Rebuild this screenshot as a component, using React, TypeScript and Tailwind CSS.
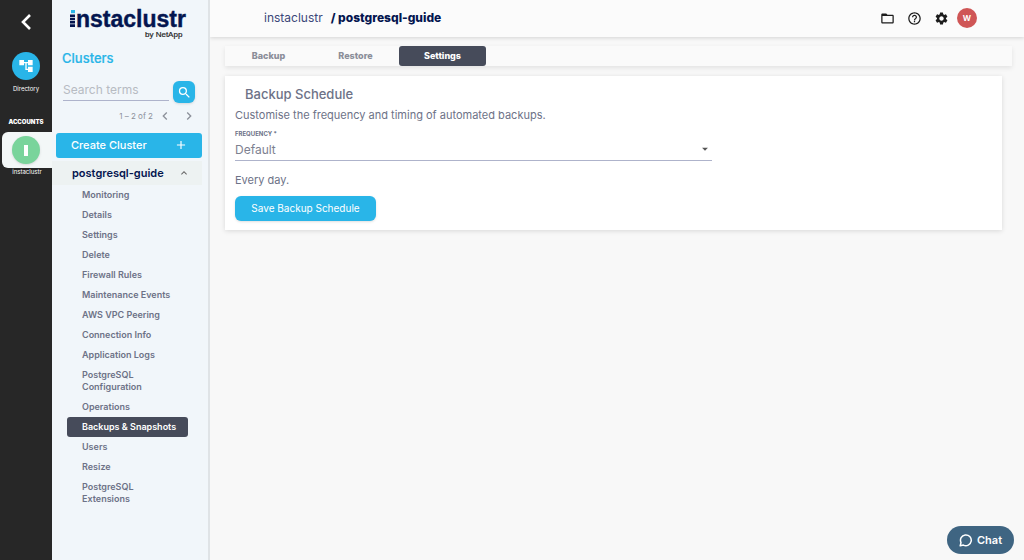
import { useState } from 'react';
import {
  MdAccountTree,
  MdAdd,
  MdArrowDropDown,
  MdChevronLeft,
  MdChevronRight,
  MdFolderOpen,
  MdHelpOutline,
  MdKeyboardArrowUp,
  MdSearch,
  MdSettings,
} from 'react-icons/md';

const menu = [
  'Monitoring',
  'Details',
  'Settings',
  'Delete',
  'Firewall Rules',
  'Maintenance Events',
  'AWS VPC Peering',
  'Connection Info',
  'Application Logs',
  'PostgreSQL Configuration',
  'Operations',
  'Backups & Snapshots',
  'Users',
  'Resize',
  'PostgreSQL Extensions',
];

const tabs = ['Backup', 'Restore', 'Settings'];

function Rail() {
  return (
    <nav aria-label="Accounts" className="flex w-[52px] shrink-0 flex-col items-center bg-[#272727] pt-3 text-white">
      <button aria-label="Back" className="flex h-5 w-8 items-center justify-center">
        <svg viewBox="0 0 12 16" className="h-4 w-3" fill="none" stroke="currentColor" strokeWidth="2.6">
          <path d="M10 1 3 8l7 7" />
        </svg>
      </button>
      <a href="#directory" className="mt-5 flex flex-col items-center">
        <span className="flex size-7 items-center justify-center rounded-full bg-[#29b5e8]">
          <MdAccountTree className="size-4" />
        </span>
        <span className="mt-[3px] text-[6px] leading-3">Directory</span>
      </a>
      <h2 className="mt-[21px] text-[6px] leading-3 font-black">ACCOUNTS</h2>
      <a href="#instaclustr" className="mt-1 flex w-full flex-col items-center pl-[2px]">
        <span className="flex h-9 w-full items-center rounded-l-md bg-[#f3f7f7] pl-[10px]">
          <span className="flex size-7 items-center justify-center rounded-full bg-[#79d49b] shadow">
            <svg viewBox="0 0 4 11" className="h-[11px] w-1" fill="white">
              <path d="M0 0h4v11H0z" />
            </svg>
          </span>
        </span>
        <span className="text-[6px] leading-[8px]">instaclustr</span>
      </a>
    </nav>
  );
}

function Logo() {
  return (
    <div className="flex flex-col pt-[7px] pl-[18px] font-['Liberation_Sans',sans-serif]">
      <div className="flex items-start" aria-label="instaclustr">
        <svg viewBox="0 0 5 18" className="mt-[3px] mr-px h-[18px] w-[5px] shrink-0">
          <path d="M1 0h4v3.2H1z" fill="#29b5e8" />
          <path d="M0 4.6h5v2.5H0zM0 7.8h5v2.5H0zM0 11h5v2.5H0zM0 14.2h5v2.8H0z" fill="#04154f" />
        </svg>
        <span className="text-[23px] leading-6 font-bold text-[#04154f] [-webkit-text-stroke:0.4px_#04154f]">
          nstaclustr
        </span>
      </div>
      <span className="pl-[75px] text-[8px] leading-[8px] text-[#222] [-webkit-text-stroke:0.2px_#222]">by NetApp</span>
    </div>
  );
}

function Sidebar() {
  return (
    <aside className="z-10 w-[158px] shrink-0 border-r-2 border-[#dfe3e6] bg-[#f1f6fa] pb-10">
      <Logo />
      <h1 className="mt-[11px] pl-[10px] text-[13px] leading-4 font-medium text-[#29b5e8] [-webkit-text-stroke:0.2px_#29b5e8]">
        Clusters
      </h1>
      <form className="mt-[15px] flex items-start pl-[11px]" onSubmit={(e) => e.preventDefault()}>
        <input
          aria-label="Search terms"
          placeholder="Search terms"
          className="h-5 w-[106px] border-b border-[#aeb3cb] bg-transparent pb-[2px] text-[12px] leading-4 outline-none placeholder:text-[#b7bbc2]"
        />
        <button
          aria-label="Search"
          className="ml-1 flex size-[22px] items-center justify-center rounded-md bg-[#29b5e8] text-white shadow"
        >
          <MdSearch className="size-[15px]" />
        </button>
      </form>
      <div className="mt-[3px] flex h-5 items-center justify-end pr-[11px] text-[#8c909a]">
        <span className="text-[8px]">1 – 2 of 2</span>
        <button aria-label="Previous page" className="ml-1">
          <MdChevronLeft className="size-4" />
        </button>
        <button aria-label="Next page" className="ml-2">
          <MdChevronRight className="size-4" />
        </button>
      </div>
      <button className="mt-[7px] ml-1 flex h-[25px] w-[146px] items-center justify-between rounded-[3px] bg-[#29b5e8] pr-[14px] pb-px pl-[15px] text-[11px] font-medium text-white">
        Create Cluster
        <MdAdd className="size-[14px]" />
      </button>
      <button
        aria-expanded="true"
        className="mt-[3px] flex h-6 w-[150px] items-center justify-between bg-[#edf2f2] pr-3 pl-5 text-[11px] font-semibold text-[#04154f]"
      >
        postgresql-guide
        <MdKeyboardArrowUp className="size-3 text-[#666]" />
      </button>
      <ul className="flex flex-col pl-[15px] text-[9px] leading-3 font-semibold text-[#6d7287]">
        {menu.map((item) => (
          <li key={item}>
            <a
              href="#item"
              className={`block w-[121px] rounded-[3px] py-1 pl-[15px] ${
                item === 'Backups & Snapshots' ? 'bg-[#464b5a] text-white' : ''
              } ${item.startsWith('PostgreSQL') ? 'pr-7' : ''}`}
            >
              {item}
            </a>
          </li>
        ))}
      </ul>
    </aside>
  );
}

function Header() {
  return (
    <header className="flex h-[37px] items-center justify-between bg-[#fbfbfb] pr-[47px] pb-px pl-[54px] shadow-[0_1px_4px_rgba(0,0,0,0.15)]">
      <div className="flex gap-2 text-[12px] text-[#04154f]">
        <a href="#account" className="text-[#3c4779]">
          instaclustr
        </a>
        <span className="font-extrabold">/ postgresql-guide</span>
      </div>
      <div className="flex items-center gap-3 text-[#1c1c1c]">
        <button aria-label="Projects">
          <MdFolderOpen className="size-[15px]" />
        </button>
        <button aria-label="Help">
          <MdHelpOutline className="size-[15px]" />
        </button>
        <button aria-label="Settings">
          <MdSettings className="size-[15px]" />
        </button>
        <button className="-ml-1 flex size-5 items-center justify-center rounded-full bg-[#cf5656] text-[8px] font-bold text-white">
          W
        </button>
      </div>
    </header>
  );
}

export default function App() {
  const [tab, setTab] = useState('Settings');
  return (
    <div className="flex min-h-screen bg-[#f8f8f8] font-[Inter,sans-serif]">
      <Rail />
      <Sidebar />
      <div className="min-w-0 flex-1">
        <Header />
        <main className="pt-[9px] pr-3 pl-[15px]">
          <div role="tablist" className="flex bg-[#fafafa] shadow-[0_2px_5px_rgba(0,0,0,0.09)]">
            {tabs.map((name) => (
              <button
                key={name}
                role="tab"
                aria-selected={tab === name}
                onClick={() => setTab(name)}
                className={`h-5 w-[87px] rounded-[3px] text-[9px] font-extrabold ${
                  tab === name ? 'bg-[#464b5a] text-white' : 'text-[#8b8e99]'
                }`}
              >
                {name}
              </button>
            ))}
          </div>
          <section className="mt-[10px] mr-[10px] bg-white px-[10px] pt-[10px] pb-[9px] text-[#6d7287] shadow-[0_1px_5px_rgba(0,0,0,0.13)]">
            <h2 className="pl-[10px] text-[13px] leading-4 font-medium">Backup Schedule</h2>
            <p className="mt-[5px] text-[11px] leading-4">
              Customise the frequency and timing of automated backups.
            </p>
            <label htmlFor="frequency" className="mt-[7px] block text-[6px] leading-[8px] font-bold">
              FREQUENCY *
            </label>
            <div className="relative mt-1 w-[63%]">
              <select
                id="frequency"
                className="block h-[19px] w-full appearance-none border-b border-[#aeb3cb] bg-transparent pb-[2px] text-[12px] leading-4 text-[#7d8190] outline-none"
              >
                <option>Default</option>
                <option>Custom</option>
              </select>
              <MdArrowDropDown className="pointer-events-none absolute top-0 right-0 size-[14px] text-[#555]" />
            </div>
            <p className="mt-[11px] text-[11px] leading-4">Every day.</p>
            <button className="mt-2 block h-[25px] w-[141px] rounded-md bg-[#29b5e8] text-[10px] text-white shadow">
              Save Backup Schedule
            </button>
          </section>
        </main>
      </div>
      <button className="fixed right-[10px] bottom-[6px] z-20 flex h-7 w-[67px] items-center justify-center gap-1 rounded-full bg-[#3f6582] text-[11px] font-semibold text-white">
        <svg viewBox="0 0 14 14" className="size-[14px]" fill="none" stroke="currentColor" strokeWidth="1.5" strokeLinejoin="round">
          <path d="M1.2 12.8 2 9.6A5.4 5.4 0 1 1 4.4 12.1Z" />
        </svg>
        Chat
      </button>
    </div>
  );
}
